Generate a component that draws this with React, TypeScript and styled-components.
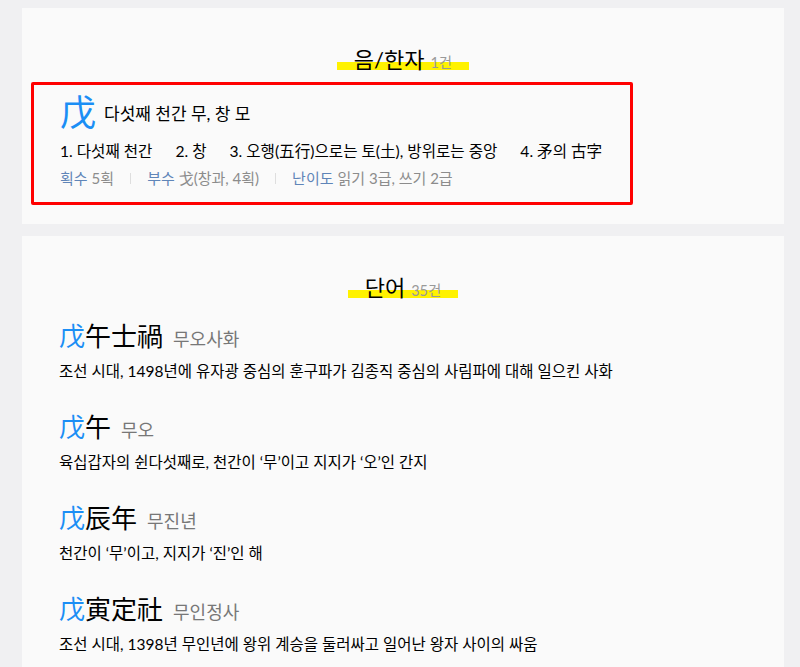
import React from "react";
import styled, { createGlobalStyle } from "styled-components";

const GlobalStyle = createGlobalStyle`
  body {
    margin: 0;
    background-color: #f0f0f2;
    font-family: Lato, "Noto Sans CJK KR", sans-serif;
    color: #000;
  }
`;

const Page = styled.main`
  display: flex;
  flex-direction: column;
  gap: 12px;
  padding: 8px 16px 0 22px;
`;

const Panel = styled.section`
  background-color: #fafafa;
  padding: 37px 0 19px 0;
  display: flex;
  flex-direction: column;
`;

const TitleRow = styled.div`
  display: flex;
  justify-content: center;
`;

const Title = styled.h2`
  margin: 0;
  padding: 0 17px;
  font-size: 22px;
  font-weight: 400;
  line-height: 30px;
  background: linear-gradient(
    to bottom,
    transparent 52%,
    #fff200 52%,
    #fff200 76%,
    transparent 76%
  );
`;

const Count = styled.span`
  margin-left: 6px;
  font-size: 14.5px;
  color: #999;
`;

const Highlight = styled.div`
  align-self: flex-start;
  margin: 4px 0 0 9px;
  padding: 7px 28px 13px 26px;
  border: 3px solid #ff0000;
  border-radius: 2px;
`;

const HanjaHead = styled.div`
  display: flex;
  align-items: center;
  gap: 8px;
  height: 40px;
`;

const BigHanja = styled.span`
  font-size: 36px;
  line-height: 40px;
  color: #1b8ef5;
`;

const Meaning = styled.span`
  font-size: 17px;
`;

const DefList = styled.ol`
  display: flex;
  gap: 23px;
  margin: 8px 0 0 0;
  padding: 0;
  list-style: none;
  font-size: 15.6px;
  line-height: 22px;
`;

const InfoRow = styled.div`
  display: flex;
  align-items: center;
  margin-top: 5px;
  font-size: 15px;
  line-height: 22px;
  color: #8c8c8c;
`;

const InfoLabel = styled.span`
  color: #5f85b8;
  margin-right: 4px;
`;

const Divider = styled.span`
  width: 1px;
  height: 11px;
  margin: 0 16px;
  background-color: #dedede;
`;

const WordList = styled.div`
  display: flex;
  flex-direction: column;
  gap: 26px;
  margin-top: 12px;
  padding: 0 37px;
`;

const Word = styled.article`
  display: flex;
  flex-direction: column;
  gap: 2px;
`;

const WordHead = styled.div`
  display: flex;
  align-items: baseline;
  gap: 10px;
  line-height: 36px;
`;

const WordHanja = styled.span`
  font-size: 26px;
`;

const Accent = styled.span`
  color: #1b8ef5;
`;

const Reading = styled.span`
  font-size: 18px;
  color: #777;
`;

const Description = styled.p`
  margin: 0;
  font-size: 15.5px;
  line-height: 24px;
`;

const words = [
  {
    rest: "午士禍",
    reading: "무오사화",
    desc: "조선 시대, 1498년에 유자광 중심의 훈구파가 김종직 중심의 사림파에 대해 일으킨 사화",
  },
  {
    rest: "午",
    reading: "무오",
    desc: "육십갑자의 쉰다섯째로, 천간이 ‘무’이고 지지가 ‘오’인 간지",
  },
  {
    rest: "辰年",
    reading: "무진년",
    desc: "천간이 ‘무’이고, 지지가 ‘진’인 해",
  },
  {
    rest: "寅定社",
    reading: "무인정사",
    desc: "조선 시대, 1398년 무인년에 왕위 계승을 둘러싸고 일어난 왕자 사이의 싸움",
  },
];

function App() {
  return (
    <>
      <GlobalStyle />
      <Page>
        <Panel>
          <TitleRow>
            <Title>
              음/한자<Count>1건</Count>
            </Title>
          </TitleRow>
          <Highlight>
            <HanjaHead>
              <BigHanja>戊</BigHanja>
              <Meaning>다섯째 천간 무, 창 모</Meaning>
            </HanjaHead>
            <DefList>
              <li>1. 다섯째 천간</li>
              <li>2. 창</li>
              <li>3. 오행(五行)으로는 토(土), 방위로는 중앙</li>
              <li>4. 矛의 古字</li>
            </DefList>
            <InfoRow>
              <InfoLabel>획수</InfoLabel>5획
              <Divider />
              <InfoLabel>부수</InfoLabel>戈(창과, 4획)
              <Divider />
              <InfoLabel>난이도</InfoLabel>읽기 3급, 쓰기 2급
            </InfoRow>
          </Highlight>
        </Panel>
        <Panel>
          <TitleRow>
            <Title>
              단어<Count>35건</Count>
            </Title>
          </TitleRow>
          <WordList>
            {words.map((w) => (
              <Word key={w.reading}>
                <WordHead>
                  <WordHanja>
                    <Accent>戊</Accent>
                    {w.rest}
                  </WordHanja>
                  <Reading>{w.reading}</Reading>
                </WordHead>
                <Description>{w.desc}</Description>
              </Word>
            ))}
          </WordList>
        </Panel>
      </Page>
    </>
  );
}

export default App;
